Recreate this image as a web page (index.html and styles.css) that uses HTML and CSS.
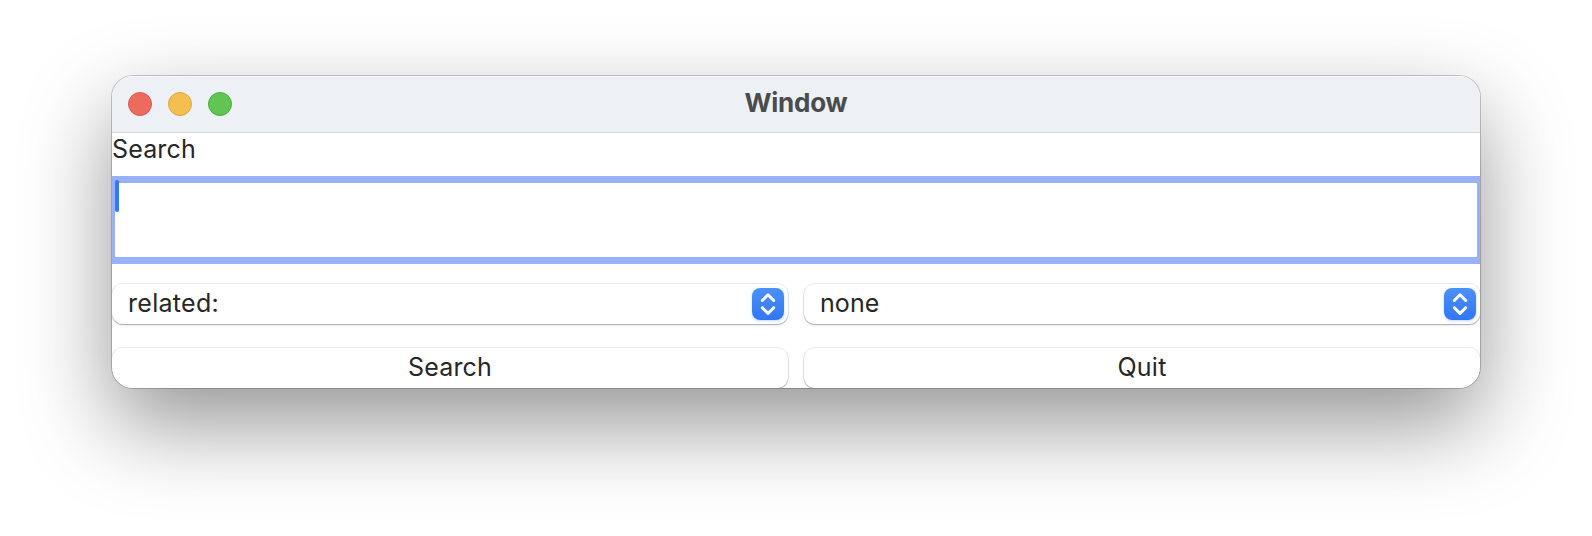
FILE: index.html
```
<!DOCTYPE html>
<html lang="en">
<head>
<meta charset="utf-8">
<title>Window</title>
<link rel="stylesheet" href="styles.css">
</head>
<body>
<main class="window">
  <header class="titlebar">
    <div class="lights">
      <span class="light close"></span>
      <span class="light minimize"></span>
      <span class="light zoom"></span>
    </div>
    <h1 class="title"><span class="title-text">Window</span></h1>
  </header>
  <div class="label"><span class="text-search">Search</span></div>
  <div class="field"><span class="caret"></span></div>
  <div class="row popups">
    <div class="popup">
      <span class="text-related">related:</span>
      <span class="stepper"><svg width="32" height="32" viewBox="0 0 32 32"><path d="M10.3 12.5 16 6.8l5.7 5.7M10.3 19.7l5.7 5.7 5.7-5.7"/></svg></span>
    </div>
    <div class="popup">
      <span class="text-none">none</span>
      <span class="stepper"><svg width="32" height="32" viewBox="0 0 32 32"><path d="M10.3 12.5 16 6.8l5.7 5.7M10.3 19.7l5.7 5.7 5.7-5.7"/></svg></span>
    </div>
  </div>
  <div class="row buttons">
    <div class="button"><span class="text-search">Search</span></div>
    <div class="button"><span class="text-quit">Quit</span></div>
  </div>
</main>
</body>
</html>
```
FILE: styles.css
```
* { box-sizing: border-box; }
body {
  margin: 0;
  height: 536px;
  padding: 76px 112px 0;
  overflow: hidden;
  background: #fff;
  color: #262626;
  font: 25px/30px Inter, "Liberation Sans", sans-serif;
}
.window {
  width: 1368px;
  height: 312px;
  overflow: hidden;
  border-radius: 21px;
  background: #fff;
  box-shadow: 0 0 0 1px rgba(0, 0, 0, .2), 0 36px 88px rgba(0, 0, 0, .42);
}
.titlebar {
  display: grid;
  grid-template-columns: 1fr auto 1fr;
  align-items: center;
  height: 57px;
  padding: 0 16px;
  background: #edf0f5;
  border-bottom: 1px solid #d5d6d8;
  box-shadow: inset 0 1px #f7f9fb;
}
.lights { display: flex; gap: 16px; }
.light { width: 24px; height: 24px; border-radius: 50%; }
.close { background: #ed6a5e; border: 1px solid #d65a50; }
.minimize { background: #f5bf4f; border: 1px solid #d9a440; }
.zoom { background: #61c554; border: 1px solid #4fa73f; }
.title { margin: 0; padding-bottom: 2px; font-size: 26px; font-weight: 700; line-height: 30px; color: #4a4b4d; }
.title-text { letter-spacing: -.25px; }
.label { height: 43px; padding-top: 1px; }
.field {
  height: 88px;
  border: solid #97b2f7;
  border-width: 7px 3px;
}
.caret {
  display: block;
  width: 4px;
  height: 32px;
  margin-top: -3px;
  border-radius: 2px;
  background: #3478f6;
}
.row { display: grid; grid-template-columns: 1fr 1fr; gap: 16px; }
.popups { margin-top: 20px; }
.buttons { margin-top: 24px; }
.popup, .button {
  display: flex;
  align-items: center;
  height: 40px;
  border-radius: 11px;
  background: #fff;
  box-shadow: 0 0 0 1px rgba(0, 0, 0, .08), 0 1px 1px rgba(0, 0, 0, .2), 0 2px 3px rgba(0, 0, 0, .07);
}
.popup { justify-content: space-between; padding: 0 4px 0 16px; }
.button { justify-content: center; }
.popup > :first-child, .button > span { padding-bottom: 2px; }
.stepper {
  width: 32px;
  height: 32px;
  border-radius: 8px;
  background: linear-gradient(#4b91f8, #3176f6);
  box-shadow: 0 1px 3px rgba(49, 118, 246, .3);
}
.stepper svg { display: block; fill: none; stroke: #fff; stroke-width: 3; stroke-linecap: round; stroke-linejoin: round; }
.text-search { letter-spacing: .15px; }
.text-quit { letter-spacing: .25px; }
.text-related { letter-spacing: .3px; }
.text-none { letter-spacing: .1px; }
```
